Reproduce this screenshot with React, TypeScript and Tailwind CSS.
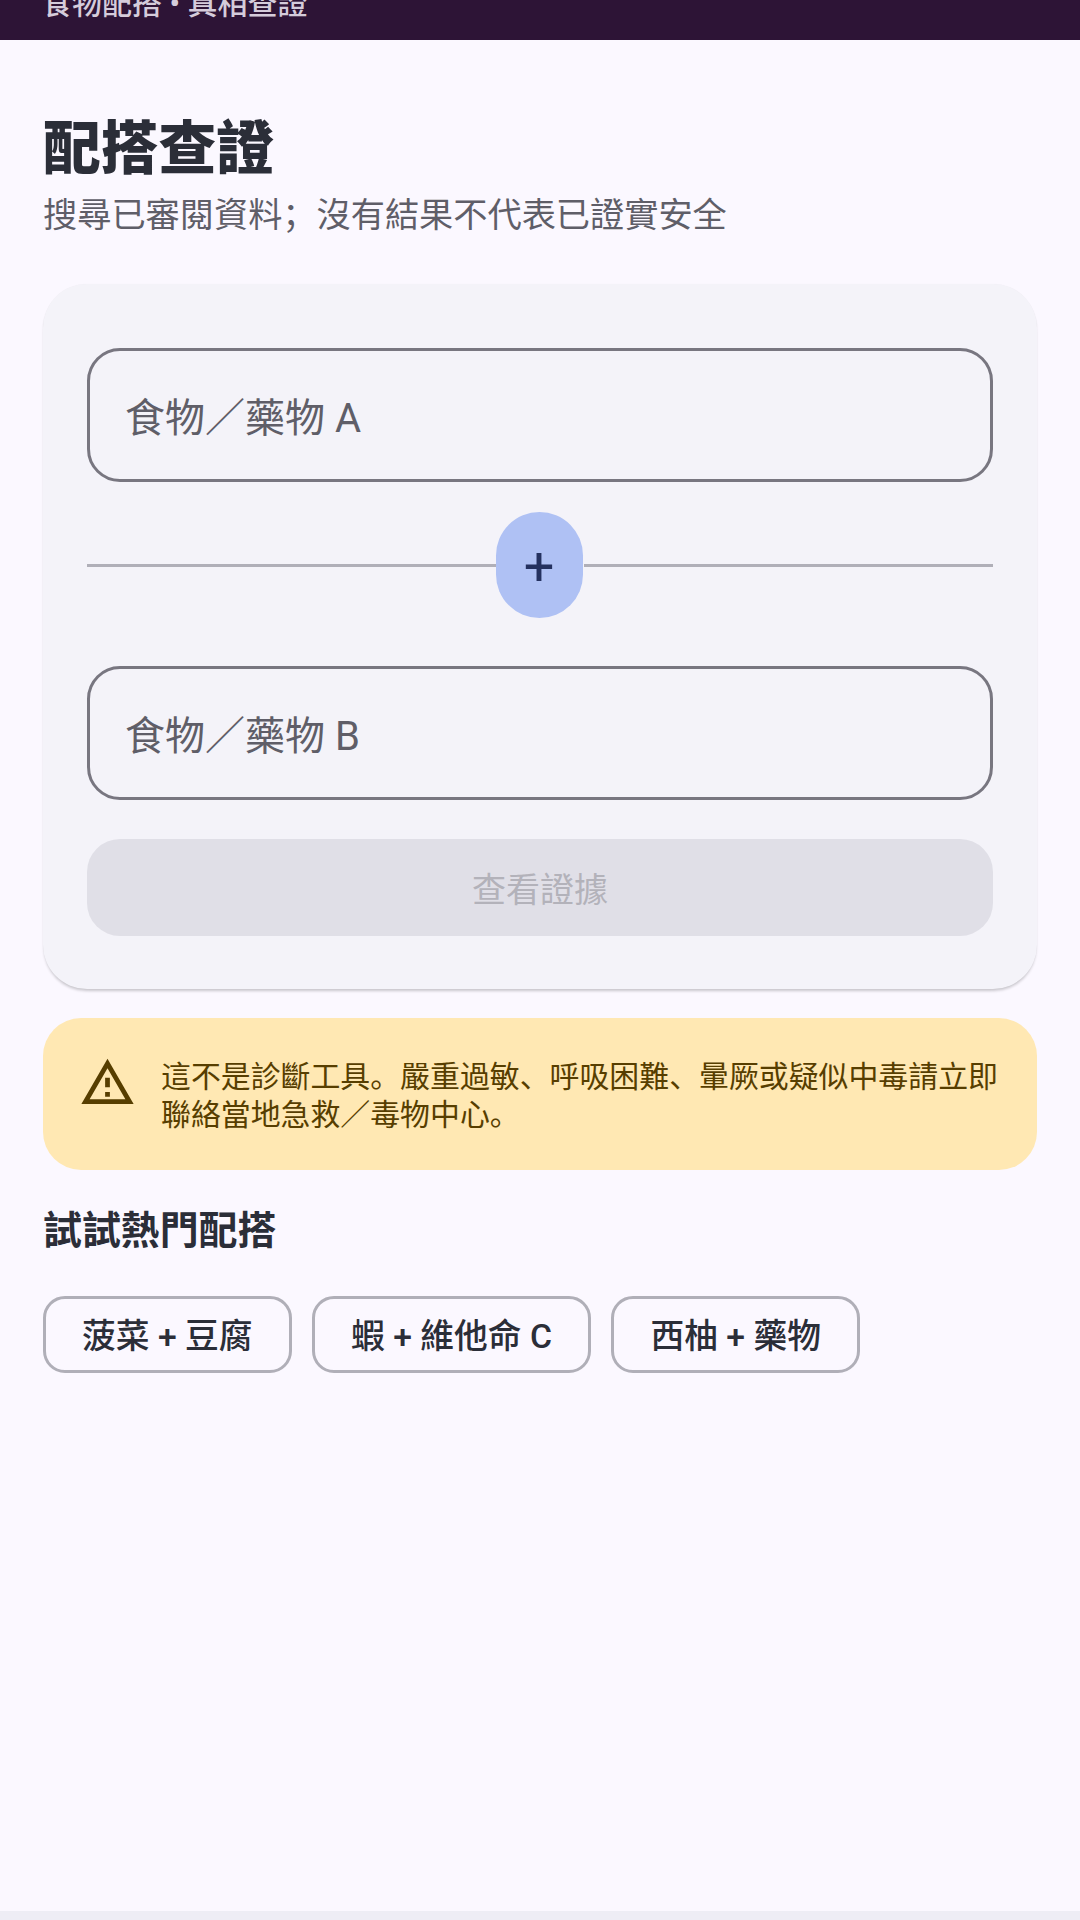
import React from 'react';

const FONT = 'font-["Roboto","Noto_Sans_CJK_SC",sans-serif]';

const samples = ['菠菜 + 豆腐', '蝦 + 維他命 C', '西柚 + 藥物'];

const PairInput: React.FC<{ placeholder: string }> = ({ placeholder }) => (
  <input
    placeholder={placeholder}
    className="w-full h-[134px] rounded-[33px] border-[3px] border-[#787680] bg-transparent px-[35px] pt-[6px] text-[40px] text-[#46464f] placeholder:text-[#5f5e68] outline-none"
  />
);

const WarningIcon = () => (
  <svg viewBox="0 0 24 24" className="w-[57px] h-[57px] shrink-0" fill="#573e00">
    <path d="M12 5.99L19.53 19H4.47L12 5.99M12 2L1 21h22L12 2zm1 14h-2v2h2v-2zm0-6h-2v4h2v-4z" />
  </svg>
);

export default function App() {
  return (
    <div className={`${FONT} h-[1920px] flex flex-col bg-[#fbf8ff] overflow-hidden`}>
      <header className="h-10 shrink-0 bg-[#2d1436] overflow-hidden flex items-end px-[42px] pb-[16px]">
        <span className="text-[30px] leading-[40px] font-medium text-[#d5ccdb] whitespace-nowrap">食物配搭 • 真相查證</span>
      </header>

      <main className="flex-1 flex flex-col px-[43px] pt-[74px]">
        <h1 className="text-[57.75px] leading-[70px] font-black text-[#2b2e38]">配搭查證</h1>
        <p className="mt-[9px] text-[34.2px] leading-[44px] text-[#5f5e68]">{'搜尋已審閱資料\uFF1B沒有結果不代表已證實安全'}</p>

        <section className="mt-[47px] rounded-[44px] bg-[#f4f3f9] px-11 pt-16 pb-[53px] shadow-[0_3px_3px_-1px_rgba(0,0,0,0.2),0_0_1px_rgba(0,0,0,0.06)]">
          <PairInput placeholder={'食物\uFF0F藥物 A'} />
          <div className="mt-[30px] mb-[48px] h-[106px] flex items-center">
            <div className="flex-1 h-[3px] bg-[#b0afb8]" />
            <div className="w-[87px] h-[106px] -translate-x-px rounded-full bg-[#afc1f4] pt-[3px] flex items-center justify-center text-[54px] leading-none text-[#24315f]">+</div>
            <div className="flex-1 h-[3px] bg-[#b0afb8]" />
          </div>
          <PairInput placeholder={'食物\uFF0F藥物 B'} />
          <button className="mt-[39px] w-full h-[97px] rounded-[33px] bg-[#e0dfe7] pt-[6px] text-[34px] text-[#b3b2ba] flex items-center justify-center">查看證據</button>
        </section>

        <aside className="mt-[29px] h-[152px] rounded-[38px] bg-[#ffe8b3] pl-9 pr-9 pt-9 flex items-start gap-[25px]">
          <WarningIcon />
          <p className="flex-1 mt-[4px] text-[29.9px] leading-[38px] text-[#573e00]">{'這不是診斷工具。嚴重過敏、呼吸困難、暈厥或疑似中毒請立即聯絡當地急救\uFF0F毒物中心。'}</p>
        </aside>

        <h2 className="mt-9 text-[38.9px] leading-[50px] font-bold text-[#2b2e38]">試試熱門配搭</h2>

        <div className="mt-10 flex gap-[20.5px]">
          {samples.map((s) => (
            <button key={s} className="h-[77px] px-[36px] pt-[5px] rounded-[22px] border-[3px] border-[#b0afb8] text-[33.75px] font-medium text-[#2b2e38] whitespace-nowrap">
              {s}
            </button>
          ))}
        </div>
      </main>

      <div className="h-[9px] shrink-0 bg-[#eeedf5]" />
    </div>
  );
}
